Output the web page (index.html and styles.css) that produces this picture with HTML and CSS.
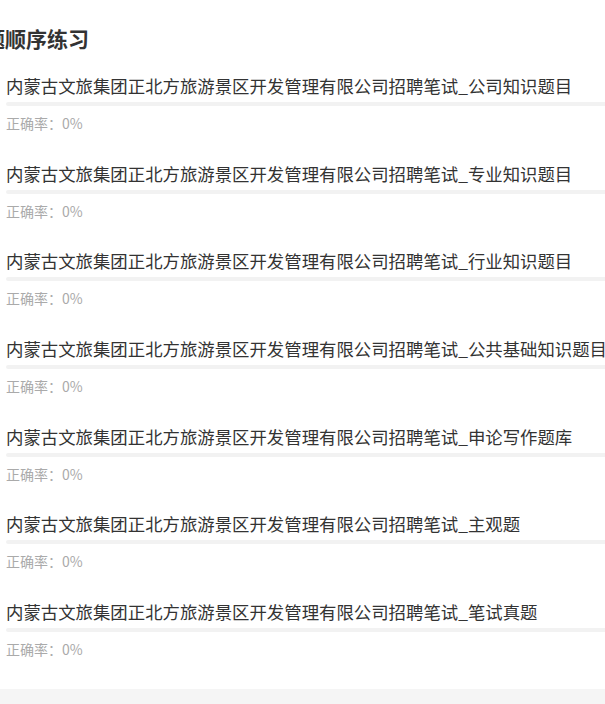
FILE: index.html
```html
<!DOCTYPE html>
<html lang="zh-CN">
<head>
<meta charset="utf-8">
<link rel="stylesheet" href="styles.css">
</head>
<body>
<div class="page">
  <h1 class="title">题顺序练习</h1>
  <ul class="list">
    <li class="item">
      <div class="name">内蒙古文旅集团正北方旅游景区开发管理有限公司招聘笔试_公司知识题目</div>
      <div class="bar"><div class="fill" style="width:0%"></div></div>
      <div class="rate">正确率：0%</div>
    </li>
    <li class="item">
      <div class="name">内蒙古文旅集团正北方旅游景区开发管理有限公司招聘笔试_专业知识题目</div>
      <div class="bar"><div class="fill" style="width:0%"></div></div>
      <div class="rate">正确率：0%</div>
    </li>
    <li class="item">
      <div class="name">内蒙古文旅集团正北方旅游景区开发管理有限公司招聘笔试_行业知识题目</div>
      <div class="bar"><div class="fill" style="width:0%"></div></div>
      <div class="rate">正确率：0%</div>
    </li>
    <li class="item">
      <div class="name">内蒙古文旅集团正北方旅游景区开发管理有限公司招聘笔试_公共基础知识题目</div>
      <div class="bar"><div class="fill" style="width:0%"></div></div>
      <div class="rate">正确率：0%</div>
    </li>
    <li class="item">
      <div class="name">内蒙古文旅集团正北方旅游景区开发管理有限公司招聘笔试_申论写作题库</div>
      <div class="bar"><div class="fill" style="width:0%"></div></div>
      <div class="rate">正确率：0%</div>
    </li>
    <li class="item">
      <div class="name">内蒙古文旅集团正北方旅游景区开发管理有限公司招聘笔试_主观题</div>
      <div class="bar"><div class="fill" style="width:0%"></div></div>
      <div class="rate">正确率：0%</div>
    </li>
    <li class="item">
      <div class="name">内蒙古文旅集团正北方旅游景区开发管理有限公司招聘笔试_笔试真题</div>
      <div class="bar"><div class="fill" style="width:0%"></div></div>
      <div class="rate">正确率：0%</div>
    </li>
  </ul>
  <div class="footer"></div>
</div>
</body>
</html>
```
FILE: styles.css
```css
html, body {
  margin: 0;
  padding: 0;
  background: #ffffff;
  overflow: hidden;
}
.page {
  font-family: "Noto Sans CJK SC", "Noto Sans", sans-serif;
  color: #333333;
}
.title {
  margin: 0 0 0 -16px;
  padding-top: 24px;
  font-size: 21px;
  line-height: 28px;
  font-weight: 700;
  color: #333333;
  white-space: nowrap;
}
.list {
  list-style: none;
  margin: 22px 0 0 0;
  padding: 0;
}
.item {
  height: 87.67px;
  padding-left: 6px;
  box-sizing: border-box;
}
.name {
  font-size: 17.4px;
  line-height: 24px;
  white-space: nowrap;
  color: #333333;
}
.bar {
  margin-top: 4px;
  height: 4px;
  background: #f2f2f2;
  border-radius: 2px 0 0 2px;
}
.fill {
  height: 100%;
  background: #4a90e2;
}
.rate {
  margin-top: 7px;
  font-size: 14px;
  line-height: 20px;
  color: #aaaaaa;
}
.footer {
  margin-top: 1px;
  height: 20px;
  background: #f5f5f5;
}
```
